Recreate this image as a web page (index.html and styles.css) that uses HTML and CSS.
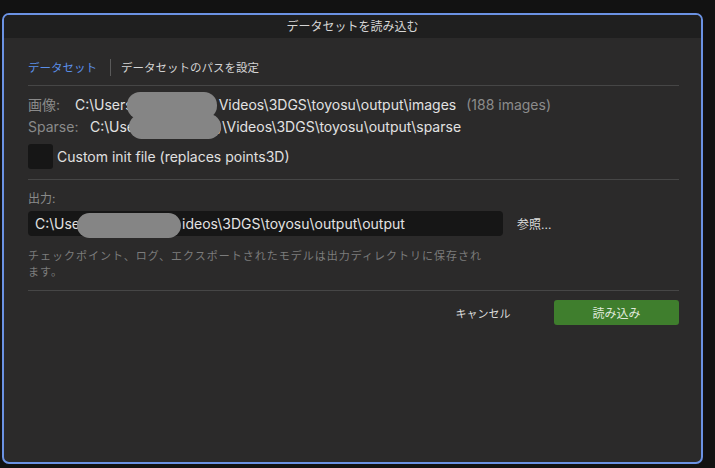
FILE: index.html
```html
<!DOCTYPE html>
<html lang="ja">
<head>
<meta charset="utf-8">
<link rel="stylesheet" href="styles.css">
</head>
<body>
<div class="dialog">
  <div class="titlebar">データセットを読み込む</div>
  <div class="content">
    <div class="tabs">
      <span class="tab active">データセット</span>
      <span class="tab-sep"></span>
      <span class="tab">データセットのパスを設定</span>
    </div>
    <div class="rule"></div>
    <div class="paths">
      <div class="path-row">
        <span class="label lab-img">画像:</span>
        <span class="path">C:\Users<span class="redact r1"></span>Videos\3DGS\toyosu\output\images</span>
        <span class="count">(188 images)</span>
      </div>
      <div class="path-row">
        <span class="label lab-sparse">Sparse:</span>
        <span class="path">C:\Use<span class="redact r2"></span>)\Videos\3DGS\toyosu\output\sparse</span>
      </div>
    </div>
    <label class="check-row">
      <span class="checkbox"></span>
      <span class="check-label">Custom init file (replaces points3D)</span>
    </label>
    <div class="rule rule2"></div>
    <div class="out-label">出力:</div>
    <div class="out-row">
      <div class="input">C:\Use<span class="redact r3"></span>ideos\3DGS\toyosu\output\output</div>
      <button class="browse">参照...</button>
    </div>
    <p class="hint">チェックポイント、ログ、エクスポートされたモデルは出力ディレクトリに保存されます。</p>
    <div class="rule rule3"></div>
    <div class="actions">
      <button class="btn cancel">キャンセル</button>
      <button class="btn primary">読み込み</button>
    </div>
  </div>
</div>
</body>
</html>
```

FILE: styles.css
```css
* { box-sizing: border-box; }
html, body { margin: 0; padding: 0; }
body {
  background: #121212;
  width: 715px;
  height: 468px;
  overflow: hidden;
  font-family: "Inter", "Noto Sans CJK JP", sans-serif;
  color: #e0e0e0;
}
.dialog {
  margin: 13px 0 0 2px;
  width: 701px;
  height: 451px;
  border: 2px solid #6b92e3;
  border-radius: 7px;
  background: #2b2a2a;
  overflow: hidden;
}
.titlebar {
  height: 23px;
  background: #1f1f1f;
  color: #d6d6d6;
  font-size: 12px;
  line-height: 23px;
  text-align: center;
}
.content {
  padding: 20px 22px 0 24px;
}
.tabs {
  display: flex;
  align-items: center;
  height: 18px;
  font-size: 11.5px;
}
.tab { color: #d4d4d4; }
.tab.active { color: #5b8fe8; }
.tab-sep {
  width: 1px;
  height: 17px;
  background: #5a5a5a;
  margin: 0 10px 0 13px;
}
.rule {
  height: 1px;
  background: #464646;
  margin-top: 9px;
}
.paths { margin-top: 7px; }
.path-row {
  display: flex;
  align-items: center;
  height: 22px;
  font-size: 14px;
  white-space: nowrap;
}
.label { color: #8a8a8a; }
.lab-img { width: 47px; }
.lab-sparse { width: 62px; }
.path { color: #e2e2e2; }
.count { color: #8c8c8c; margin-left: 10px; }
.redact {
  display: inline-block;
  position: relative;
  vertical-align: middle;
  height: 1px;
}
.redact::before {
  content: "";
  position: absolute;
  background: #858585;
  border-radius: 13px;
}
.r1 { width: 86px; }
.r1::before { left: -6px; top: -13px; width: 90px; height: 27px; }
.r2 { width: 82px; }
.r2::before { left: -6px; top: -13px; width: 92px; height: 25px; }
.r3 { width: 102px; }
.r3::before { left: -3px; top: -12px; width: 104px; height: 25px; }
.check-row {
  display: flex;
  align-items: center;
  margin-top: 7px;
  height: 25px;
  font-size: 14px;
}
.checkbox {
  width: 25px;
  height: 25px;
  background: #161616;
  border-radius: 3px;
  margin-right: 4px;
}
.check-label { color: #e0e0e0; }
.rule2 { margin-top: 10px; }
.out-label {
  margin-top: 11px;
  font-size: 12px;
  line-height: 16px;
  color: #8a8a8a;
}
.out-row {
  display: flex;
  align-items: center;
  margin-top: 4px;
}
.input {
  width: 475px;
  height: 25px;
  background: #161616;
  border-radius: 4px;
  padding-left: 7px;
  font-size: 14px;
  line-height: 25px;
  color: #e2e2e2;
  white-space: nowrap;
}
.browse {
  background: none;
  border: none;
  color: #dcdcdc;
  font-family: inherit;
  font-size: 12px;
  padding: 0;
  margin-left: 14px;
}
.hint {
  margin: 12px 0 0 0;
  width: 460px;
  font-size: 11px;
  letter-spacing: 1px;
  line-height: 16px;
  color: #7c7c7c;
}
.rule3 { margin-top: 10px; }
.actions {
  display: flex;
  justify-content: flex-end;
  align-items: center;
  margin-top: 9px;
  gap: 21px;
}
.btn {
  height: 25px;
  border: none;
  font-family: inherit;
  font-size: 12px;
  border-radius: 3px;
  padding: 0;
}
.cancel {
  background: none;
  color: #dcdcdc;
  font-size: 11px;
  width: 100px;
}
.primary {
  width: 125px;
  background: #3f7e2d;
  color: #dfe8da;
}
```
